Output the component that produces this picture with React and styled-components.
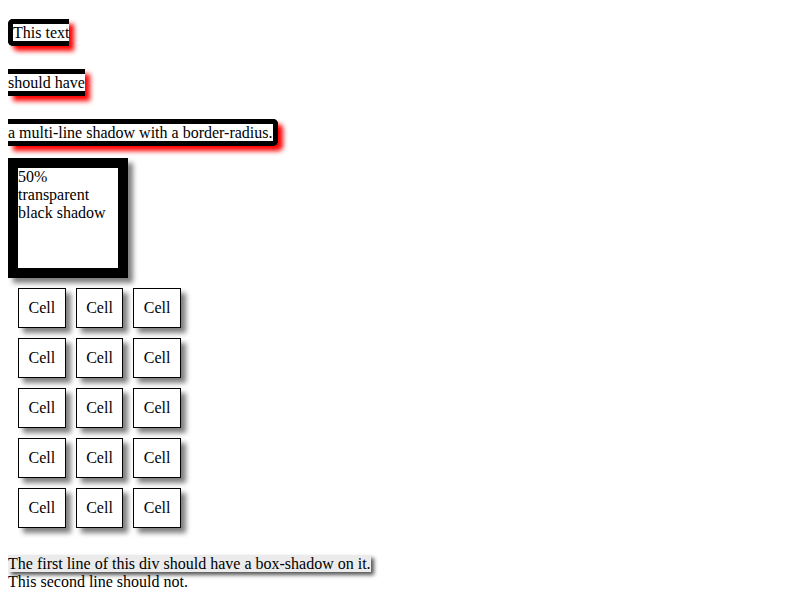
import React from 'react';
import styled, { createGlobalStyle } from 'styled-components';

const GlobalStyle = createGlobalStyle`
    body {
        margin: 8px;
        font-family: "Liberation Serif", "Times New Roman", serif;
        font-size: 16px;
        color: black;
        background: white;
    }
`;

const ShadowLines = styled.div`
    line-height: 50px;
`;

// each line fragment of the inline box, with its own part of the border
const Fragment = styled.span`
    border: 5px solid black;
    border-left-width: ${p => (p.$first ? '5px' : '0')};
    border-right-width: ${p => (p.$last ? '5px' : '0')};
    border-radius: ${p => (p.$first ? '5px 0 0 5px' : p.$last ? '0 5px 5px 0' : '0')};
    box-shadow: 5px 5px 5px red;
`;

const HalfShadowBox = styled.div`
    width: 100px;
    height: 100px;
    border: 10px solid black;
    box-shadow: 5px 5px 5px rgba(0, 0, 0, 0.5);
`;

const CellTable = styled.table`
    border-spacing: 10px;
`;

const Cell = styled.td`
    border: 1px solid black;
    padding: 10px 9.5px;
    box-shadow: 5px 5px 5px gray;
`;

const FirstLineDiv = styled.div`
    margin-top: 17px;
    margin-bottom: 88px;
`;

const FirstLine = styled.span`
    background-color: #ebebeb;
    box-shadow: 3px 3px 4px #555;
`;

const rows = [0, 1, 2, 3, 4];
const cols = [0, 1, 2];

const App = () => {
    return (
        <>
            <GlobalStyle />
            <ShadowLines>
                <Fragment $first>This text</Fragment><br />
                <Fragment>should have</Fragment><br />
                <Fragment $last>a multi-line shadow with a border-radius.</Fragment>
            </ShadowLines>
            <HalfShadowBox>50% transparent black shadow</HalfShadowBox>
            <CellTable>
                <tbody>
                    {rows.map(r => (
                        <tr key={r}>
                            {cols.map(c => <Cell key={c}>Cell</Cell>)}
                        </tr>
                    ))}
                </tbody>
            </CellTable>
            <FirstLineDiv>
                <FirstLine>The first line of this div should have a box-shadow on it.</FirstLine><br />
                This second line should not.
            </FirstLineDiv>
        </>
    );
};

export default App;
